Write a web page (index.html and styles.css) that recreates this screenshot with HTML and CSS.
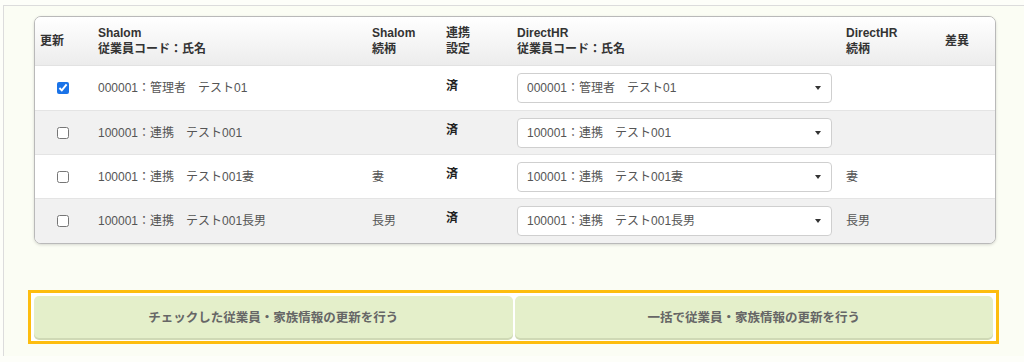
FILE: index.html
```html
<!DOCTYPE html>
<html lang="ja">

<head>
  <meta charset="UTF-8">
  <meta name="viewport" content="width=device-width, initial-scale=1.0">
  <title>従業員連携</title>
  <link rel="stylesheet" href="styles.css">
</head>

<body>
  <div class="frame">
    <div class="card">
      <table class="link-table">
        <colgroup>
          <col class="c-check">
          <col class="c-code">
          <col class="c-rel">
          <col class="c-link">
          <col class="c-select">
          <col class="c-rel2">
          <col class="c-diff">
        </colgroup>
        <thead>
          <tr>
            <th>更新</th>
            <th>Shalom<br>従業員コード：氏名</th>
            <th>Shalom<br>続柄</th>
            <th>連携<br>設定</th>
            <th>DirectHR<br>従業員コード：氏名</th>
            <th>DirectHR<br>続柄</th>
            <th>差異</th>
          </tr>
        </thead>
        <tbody>
          <tr>
            <td class="check"><input type="checkbox" checked></td>
            <td>000001：管理者　テスト01</td>
            <td></td>
            <td class="done">済</td>
            <td>
              <div class="select">
                <select>
                  <option>000001：管理者　テスト01</option>
                </select>
              </div>
            </td>
            <td></td>
            <td></td>
          </tr>
          <tr>
            <td class="check"><input type="checkbox"></td>
            <td>100001：連携　テスト001</td>
            <td></td>
            <td class="done">済</td>
            <td>
              <div class="select">
                <select>
                  <option>100001：連携　テスト001</option>
                </select>
              </div>
            </td>
            <td></td>
            <td></td>
          </tr>
          <tr>
            <td class="check"><input type="checkbox"></td>
            <td>100001：連携　テスト001妻</td>
            <td>妻</td>
            <td class="done">済</td>
            <td>
              <div class="select">
                <select>
                  <option>100001：連携　テスト001妻</option>
                </select>
              </div>
            </td>
            <td>妻</td>
            <td></td>
          </tr>
          <tr>
            <td class="check"><input type="checkbox"></td>
            <td>100001：連携　テスト001長男</td>
            <td>長男</td>
            <td class="done">済</td>
            <td>
              <div class="select">
                <select>
                  <option>100001：連携　テスト001長男</option>
                </select>
              </div>
            </td>
            <td>長男</td>
            <td></td>
          </tr>
        </tbody>
      </table>
    </div>

    <div class="actions">
      <button class="action-btn">チェックした従業員・家族情報の更新を行う</button>
      <button class="action-btn">一括で従業員・家族情報の更新を行う</button>
    </div>
  </div>
</body>

</html>
```

FILE: styles.css
```css
body {
  margin: 0;
  font-family: 'Liberation Sans', 'Noto Sans CJK JP', sans-serif;
  font-size: 12px;
  color: #555;
  background-color: #fdfef9;
}

.frame {
  margin: 5px 0 0 3px;
  padding: 10px 0 12px 0;
  border-top: 1px solid #dcdcdc;
  border-left: 1px solid #dcdcdc;
  background-color: #fbfdf4;
}

.card {
  width: 962px;
  margin-left: 30px;
  border: 1px solid #b9b9b9;
  border-radius: 7px;
  background-color: white;
  box-shadow: 0 1px 3px rgba(0, 0, 0, 0.15);
  overflow: hidden;
  box-sizing: border-box;
}

.link-table {
  width: 960px;
  border-collapse: collapse;
  table-layout: fixed;
}

.c-check { width: 55px; }
.c-code { width: 274px; }
.c-rel { width: 74px; }
.c-link { width: 71px; }
.c-select { width: 329px; }
.c-rel2 { width: 99px; }
.c-diff { width: 58px; }

.link-table th {
  height: 48px;
  padding: 0 5px 0 8px;
  text-align: left;
  vertical-align: middle;
  font-weight: bold;
  line-height: 16px;
  color: #333;
  background: linear-gradient(to bottom, #ffffff 0%, #f4f4f4 60%, #ececec 100%);
  border-bottom: 1px solid #e2e2e2;
}

.link-table th:first-child {
  padding-left: 5px;
}

.link-table td {
  height: 44px;
  padding: 0 8px;
  vertical-align: middle;
  line-height: 16px;
  border-top: 1px solid #e4e4e4;
  white-space: nowrap;
  box-sizing: border-box;
}

.link-table tbody tr:first-child td {
  border-top: none;
  height: 45px;
}

.link-table tbody tr:nth-child(even) td {
  background-color: #f1f1f1;
}

.link-table td.check {
  text-align: center;
  padding: 0 0 0 1px;
}

.check input {
  display: block;
  width: 12px;
  height: 12px;
  margin: 0 auto;
  accent-color: #1a73e8;
}

.link-table td.done {
  font-weight: bold;
  color: #222;
  padding-bottom: 5px;
}

.select {
  position: relative;
  width: 315px;
  height: 30px;
}

.select select {
  display: block;
  appearance: none;
  -webkit-appearance: none;
  width: 100%;
  height: 30px;
  padding: 0 24px 0 9px;
  border: 1px solid #cfcfcf;
  border-radius: 4px;
  background-color: white;
  font-family: inherit;
  font-size: 12px;
  color: #555;
  box-sizing: border-box;
}

/* 下拉箭頭 */
.select::after {
  content: "";
  position: absolute;
  right: 11px;
  top: 13px;
  border-left: 3.5px solid transparent;
  border-right: 3.5px solid transparent;
  border-top: 4px solid #333;
  pointer-events: none;
}

.actions {
  display: grid;
  grid-template-columns: 1fr 1fr;
  gap: 2px;
  width: 971px;
  margin: 46px 0 0 24px;
  padding: 3px;
  border: 3px solid #fdbd0f;
  background-color: white;
  box-sizing: border-box;
}

.action-btn {
  height: 42px;
  border: none;
  border-radius: 5px;
  background-color: #e4efca;
  box-shadow: 0 2px 0 #cfd9b5;
  font-family: inherit;
  font-size: 12.5px;
  font-weight: bold;
  color: #666;
  cursor: pointer;
}

.action-btn:hover {
  background-color: #dbe8bd;
}
```
